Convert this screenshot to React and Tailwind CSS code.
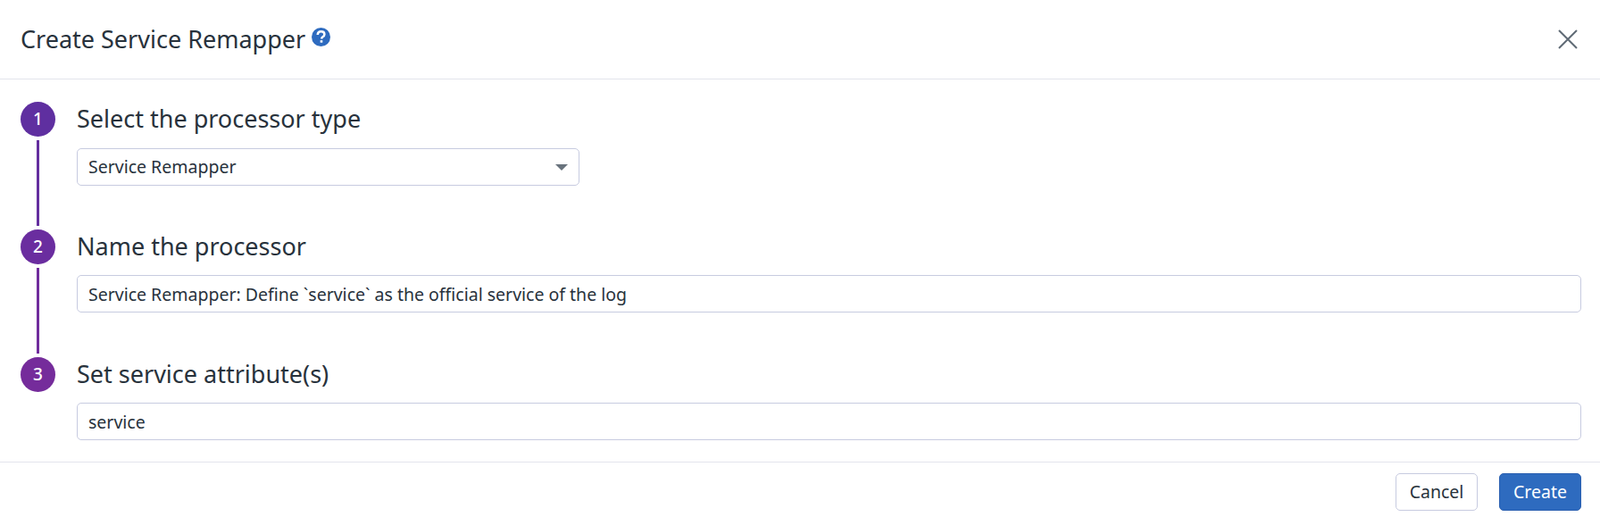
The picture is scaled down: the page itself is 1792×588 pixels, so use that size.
const FONT = "font-['Noto_Sans',sans-serif]";

function HelpIcon() {
  return (
    <svg aria-hidden="true" viewBox="0 0 20 20" className="ml-[7px] mt-[-5px] h-[21px] w-[21px]">
      <circle cx="10" cy="10" r="10" fill="#2e6bbf" />
      <path
        d="M6.4 7.6c.1-2.1 1.5-3.5 3.7-3.5 2.1 0 3.6 1.3 3.6 3 0 1.3-.7 2-1.8 2.7-.9.6-1.1.9-1.1 1.7v.3"
        fill="none"
        stroke="#fff"
        strokeWidth="2.4"
      />
      <rect x="9.2" y="13.4" width="2.5" height="2.5" fill="#fff" />
    </svg>
  );
}

function CloseIcon() {
  return (
    <svg aria-hidden="true" viewBox="0 0 22 22" className="h-[22px] w-[22px]">
      <path d="M1 1l20 20M21 1L1 21" fill="none" stroke="#5f6a75" strokeWidth="2" />
    </svg>
  );
}

function Step({ number, title, circleClass, lineClass, children }) {
  return (
    <div className={`flex ${lineClass ? 'h-[143px]' : 'h-[118px]'}`}>
      <div className="flex w-[63px] shrink-0 flex-col items-start">
        <div
          className={`flex h-[39px] w-[39px] items-center justify-center rounded-full text-[19px] font-medium text-white ${circleClass}`}
        >
          {number}
        </div>
        {lineClass && <div className={`ml-[18px] mt-[4px] h-[96px] w-[3px] ${lineClass}`} />}
      </div>
      <div className="min-w-0 flex-1">
        <h2 className="h-[40px] text-[27px] leading-[38px] text-[#28323c]">{title}</h2>
        <div className="mt-[11px]">{children}</div>
      </div>
    </div>
  );
}

function TextBox({ value }) {
  return (
    <input
      type="text"
      readOnly
      value={value}
      className="block h-[42px] w-full rounded-[5px] border border-[#c7cbe0] bg-white px-[12px] text-[19.5px] text-[#28323c] outline-none"
    />
  );
}

export default function App() {
  return (
    <div className={`${FONT} h-[588px] w-[1792px] overflow-hidden bg-white`}>
      <header className="flex h-[89px] items-center justify-between border-b border-[#e3e4ec] pl-[23px] pr-[25px]">
        <div className="flex items-center">
          <h1 className="text-[27px] leading-[36px] text-[#28323c]">Create Service Remapper</h1>
          <HelpIcon />
        </div>
        <button type="button" aria-label="Close" className="mb-[1px]">
          <CloseIcon />
        </button>
      </header>

      <main className="h-[428px] pl-[23px] pr-[21px] pt-[25px]">
        <Step number={1} title="Select the processor type" circleClass="bg-[#5f2fa0]" lineClass="bg-[#642e9f]">
          <div className="mt-[12px] flex h-[42px] w-[563px] items-center justify-between rounded-[5px] border border-[#c7cbe0] bg-white px-[12px] text-[19.5px] text-[#28323c]">
            <span>Service Remapper</span>
            <span className="h-0 w-0 border-x-[7px] border-t-[7px] border-x-transparent border-t-[#69737d]" />
          </div>
        </Step>
        <Step number={2} title="Name the processor" circleClass="bg-[#6a2d9f]" lineClass="bg-[#702c9d]">
          <TextBox value="Service Remapper: Define `service` as the official service of the log" />
        </Step>
        <Step number={3} title="Set service attribute(s)" circleClass="bg-[#752c9b]">
          <TextBox value="service" />
        </Step>
      </main>

      <footer className="flex items-start justify-end gap-[24px] border-t border-[#e3e4ec] pr-[21px] pt-[12px]">
        <button
          type="button"
          className="h-[42px] w-[92px] rounded-[5px] border border-[#c7cbe0] bg-white text-[19.5px] text-[#28323c]"
        >
          Cancel
        </button>
        <button
          type="button"
          className="h-[42px] w-[92px] rounded-[5px] border border-[#2a5fb0] bg-[#2e6bbf] text-[19.5px] text-white"
        >
          Create
        </button>
      </footer>
    </div>
  );
}
